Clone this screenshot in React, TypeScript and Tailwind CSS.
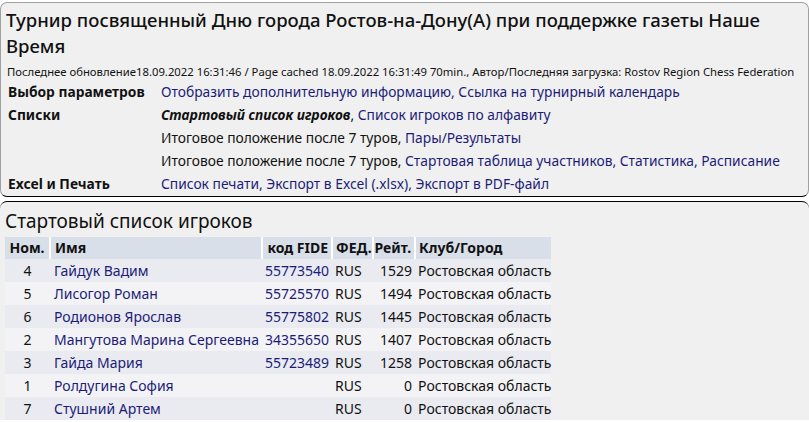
import React from 'react';

const players = [
  { no: 4, name: 'Гайдук Вадим', fide: '55773540', fed: 'RUS', rtg: 1529, club: 'Ростовская область' },
  { no: 5, name: 'Лисогор Роман', fide: '55725570', fed: 'RUS', rtg: 1494, club: 'Ростовская область' },
  { no: 6, name: 'Родионов Ярослав', fide: '55775802', fed: 'RUS', rtg: 1445, club: 'Ростовская область' },
  { no: 2, name: 'Мангутова Марина Сергеевна', fide: '34355650', fed: 'RUS', rtg: 1407, club: 'Ростовская область' },
  { no: 3, name: 'Гайда Мария', fide: '55723489', fed: 'RUS', rtg: 1258, club: 'Ростовская область' },
  { no: 1, name: 'Ролдугина София', fide: '', fed: 'RUS', rtg: 0, club: 'Ростовская область' },
  { no: 7, name: 'Стушний Артем', fide: '', fed: 'RUS', rtg: 0, club: 'Ростовская область' },
];

const Link = ({ children }: { children: React.ReactNode }) => (
  <span className="text-[#1c1c78]">{children}</span>
);

export default function App() {
  return (
    <div className="min-h-[422px] bg-white text-[#111] font-['Noto_Sans','Open_Sans',sans-serif]">
      {/* header box */}
      <div className="mt-[2px] rounded-[7px] border border-[#a0a0a0] border-b-black bg-[#f0f0f0] pb-[1px] pl-[5px]">
        <h1 className="pt-[4px] pr-[30px] text-[18.5px] leading-[26px] font-medium">
          Турнир посвященный Дню города Ростов-на-Дону(А) при поддержке газеты Наше Время
        </h1>
        <div className="mt-[6px] text-[11.3px] leading-[14px] pl-[1px] whitespace-nowrap">
          Последнее обновление18.09.2022 16:31:46 / Page cached 18.09.2022 16:31:49 70min., Автор/Последняя загрузка: Rostov Region Chess Federation
        </div>
        <div className="mt-[1px] grid grid-cols-[153px_1fr] text-[13.8px] leading-[23px] pl-[2px]">
          <div className="font-bold">Выбор параметров</div>
          <div><Link>Отобразить дополнительную информацию, Ссылка на турнирный календарь</Link></div>
          <div className="font-bold">Списки</div>
          <div>
            <span className="font-bold italic">Стартовый список игроков</span>, <Link>Список игроков по алфавиту</Link>
          </div>
          <div />
          <div>Итоговое положение после 7 туров, <Link>Пары/Результаты</Link></div>
          <div />
          <div>
            Итоговое положение после 7 туров, <Link>Стартовая таблица участников, Статистика, Расписание</Link>
          </div>
          <div className="font-bold">Excel и Печать</div>
          <div><Link>Список печати, Экспорт в Excel (.xlsx), Экспорт в PDF-файл</Link></div>
        </div>
      </div>

      {/* starting list */}
      <div className="mt-[4px] rounded-t-[7px] border-t border-black bg-[#f0f0f0] pl-[5px]">
        <h2 className="pt-[6px] text-[19px] leading-[26px]">Стартовый список игроков</h2>
        <table className="mt-[3px] border-collapse text-[14px] leading-[23px]">
          <thead>
            <tr className="bg-[#d8dfe9] font-bold leading-[22px]">
              <th className="w-[45px] border-r-2 border-white text-center">Ном.</th>
              <th className="w-[212px] border-r-2 border-white pl-[4px] text-left">Имя</th>
              <th className="w-[68px] border-r-2 border-white px-[3px] text-right">код FIDE</th>
              <th className="w-[41px] border-r-2 border-white pl-[3px] text-left">ФЕД.</th>
              <th className="w-[42px] border-r-2 border-white pr-[3px] text-right">Рейт.</th>
              <th className="w-[135px] pl-[3px] text-left">Клуб/Город</th>
            </tr>
          </thead>
          <tbody>
            {players.map((p, i) => (
              <tr key={p.no} className={i % 2 === 0 ? 'bg-[#e9ebf0]' : 'bg-[#f3f3f5]'}>
                <td className="text-center">{p.no}</td>
                <td className="pl-[4px] whitespace-nowrap"><Link>{p.name}</Link></td>
                <td className="px-[3px] text-right"><Link>{p.fide}</Link></td>
                <td className="pl-[3px]">{p.fed}</td>
                <td className="pr-[3px] text-right">{p.rtg}</td>
                <td className="pl-[3px] whitespace-nowrap">{p.club}</td>
              </tr>
            ))}
          </tbody>
        </table>
      </div>
    </div>
  );
}
